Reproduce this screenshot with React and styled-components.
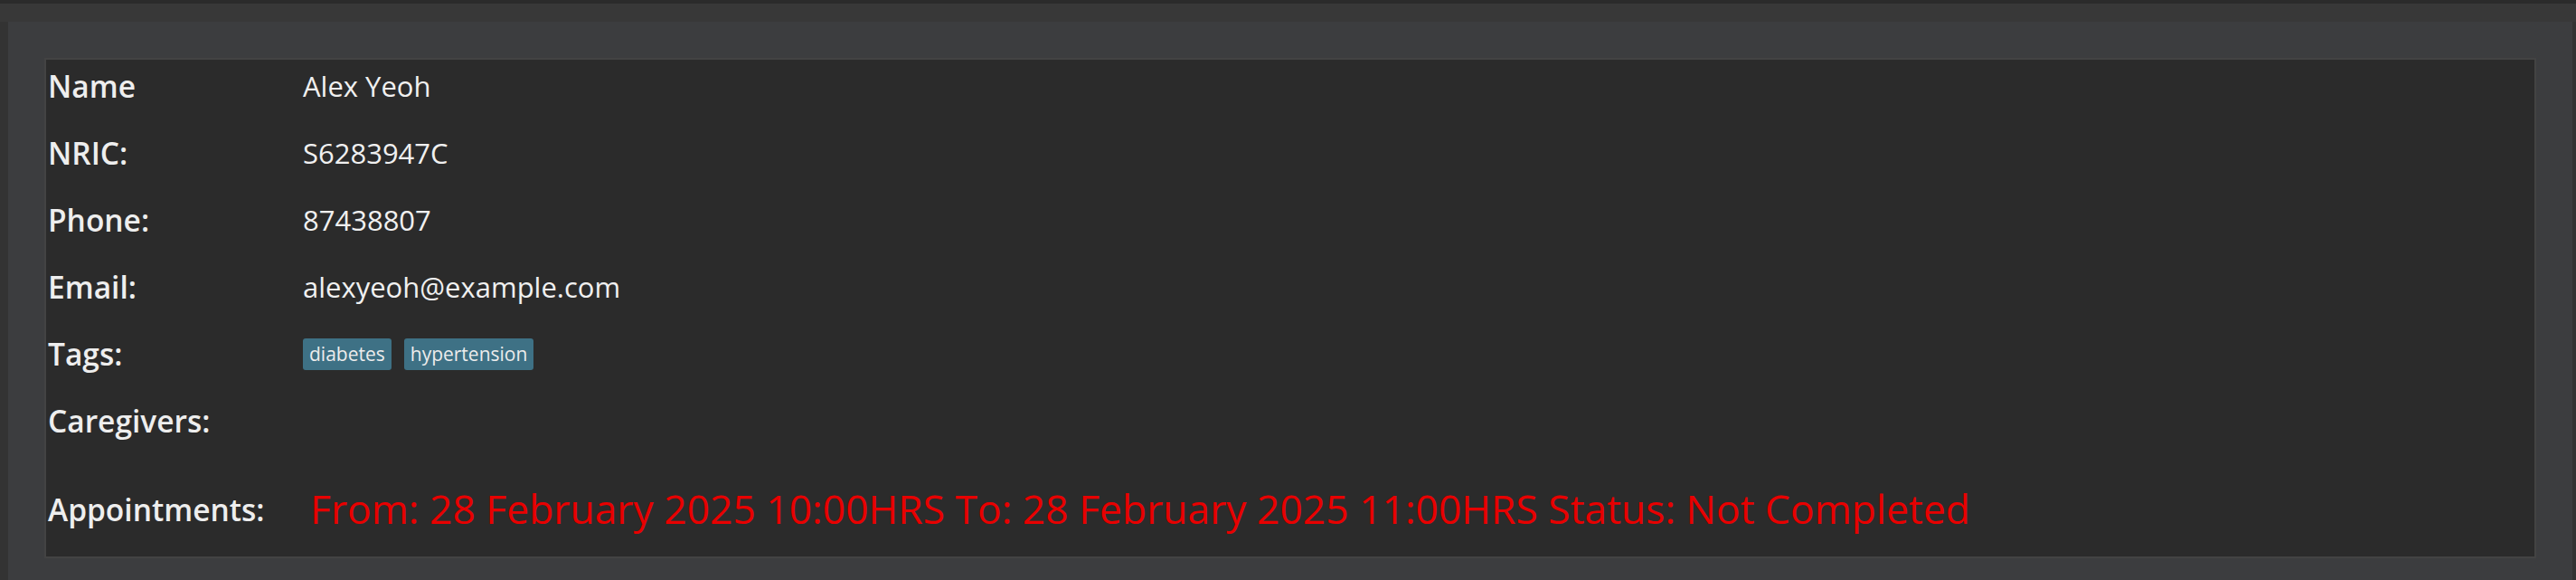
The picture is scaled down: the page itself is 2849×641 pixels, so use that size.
import React from 'react';
import styled, { createGlobalStyle } from 'styled-components';

//styling
const GlobalStyle = createGlobalStyle`
  html, body {
    margin: 0;
    padding: 0;
    background-color: #2b2b2b;
  }
  #root {
    height: 100vh;
  }
`;

const Page = styled.div`
  display: flex;
  flex-direction: column;
  height: 100vh;
  padding-top: 4px;
  box-sizing: border-box;
  overflow: hidden;
  background-color: #2b2b2b;
  font-family: 'Open Sans', 'Noto Sans', sans-serif;
`;

const Frame = styled.div`
  display: flex;
  flex-direction: column;
  flex: 1;
  padding-top: 20px;
  background-color: #383838;
`;

const Shell = styled.div`
  display: flex;
  flex: 1;
  padding: 0 4px 0 9px;
  background-color: #333333;
`;

const Panel = styled.div`
  flex: 1;
  padding: 40px 40px 0 40px;
  background-color: #3c3d3f;
`;

const Card = styled.div`
  display: flex;
  flex-direction: column;
  gap: 28px;
  padding: 6px 0 22px 2px;
  background-color: #2b2b2b;
  border: 2px solid #434343;
`;

const Row = styled.div`
  display: flex;
  align-items: center;
  line-height: 46px;
  margin-top: ${props => (props.$spaced ? '16px' : '0')};
`;

const Label = styled.div`
  flex: 0 0 282px;
  font-size: 33.5px;
  font-weight: 600;
  color: #eeeeee;
`;

const Value = styled.div`
  font-size: 31px;
  font-weight: 400;
  color: #f0f0f0;
  white-space: nowrap;
`;

const TagList = styled.div`
  display: flex;
  align-items: center;
  gap: 14px;
`;

const Tag = styled.span`
  padding: 4px 7px;
  font-size: 21px;
  line-height: 27px;
  color: #ececec;
  background-color: #3e7185;
  border-radius: 3px;
`;

const Appointment = styled.div`
  margin-left: 8px;
  font-size: 44.4px;
  line-height: 61px;
  color: #e80000;
  white-space: nowrap;
`;

//data
const person = {
  name: 'Alex Yeoh',
  nric: 'S6283947C',
  phone: '87438807',
  email: 'alexyeoh@example.com',
  tags: ['diabetes', 'hypertension'],
  caregivers: [],
  appointments: [
    {
      from: '28 February 2025 10:00HRS',
      to: '28 February 2025 11:00HRS',
      status: 'Not Completed'
    }
  ]
};

//implementation
export default function App() {
  const fields = [
    { label: 'Name', value: person.name },
    { label: 'NRIC:', value: person.nric },
    { label: 'Phone:', value: person.phone },
    { label: 'Email:', value: person.email }
  ];

  return (
    <Page>
      <GlobalStyle />
      <Frame>
        <Shell>
          <Panel>
            <Card>
              {fields.map(field => (
                <Row key={field.label}>
                  <Label>{field.label}</Label>
                  <Value>{field.value}</Value>
                </Row>
              ))}
              <Row>
                <Label>Tags:</Label>
                <TagList>
                  {person.tags.map(tag => (
                    <Tag key={tag}>{tag}</Tag>
                  ))}
                </TagList>
              </Row>
              <Row>
                <Label>Caregivers:</Label>
                <Value>{person.caregivers.join(', ')}</Value>
              </Row>
              <Row $spaced>
                <Label>Appointments:</Label>
                {person.appointments.map((appt, i) => (
                  <Appointment key={i}>
                    {'From: ' + appt.from + ' To: ' + appt.to + ' Status: ' + appt.status}
                  </Appointment>
                ))}
              </Row>
            </Card>
          </Panel>
        </Shell>
      </Frame>
    </Page>
  );
}
